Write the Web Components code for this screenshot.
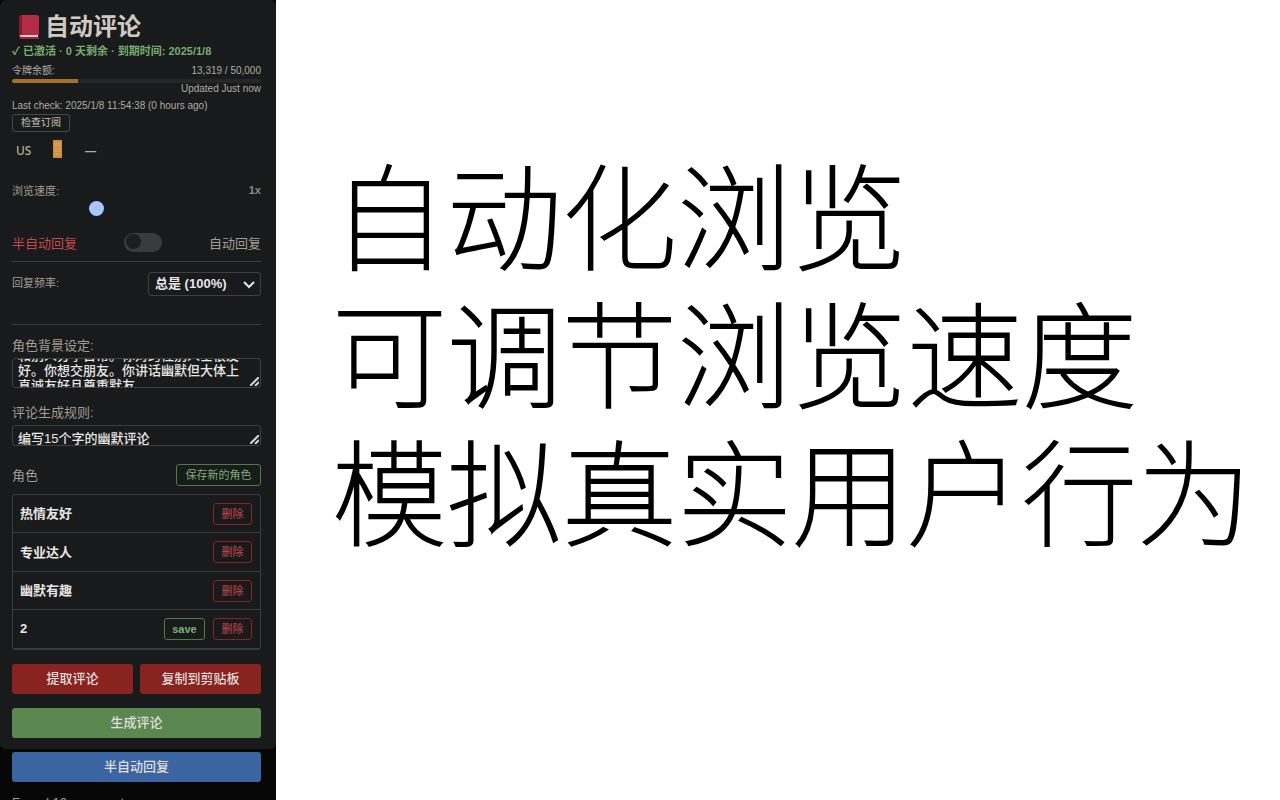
<!DOCTYPE html>
<html lang="zh-CN">
<head>
<meta charset="utf-8">
<meta name="viewport" content="width=device-width, initial-scale=1">
<title>自动评论</title>
<style>
html,body{margin:0;height:100%}
body{overflow:hidden;font-family:"Liberation Sans","Noto Sans CJK SC",sans-serif;background:#fff}
</style>
</head>
<body>
<comment-app></comment-app>
<script>
const define = (name, css, html, ready) => customElements.define(name, class extends HTMLElement {
  constructor() {
    super();
    this.attachShadow({ mode: "open" }).innerHTML =
      `<style>*{box-sizing:border-box}:host{display:block}${css}</style>${html}`;
  }
  connectedCallback() { if (ready) ready(this); }
});

define("plugin-button", `
  button{display:block;width:100%;height:30px;padding:0;border:0;border-radius:3px;background:var(--fill,#882320);color:#e0ddd9;font:500 13px/28px "Liberation Sans","Noto Sans CJK SC",sans-serif}
  :host([small]) button{height:22px;padding:0;border:1px solid var(--line);background:transparent;color:var(--ink);font-size:11px;font-weight:var(--weight,400);line-height:18px}
  :host([tiny]) button{height:18px;padding:0;border:1px solid #45494b;background:transparent;color:#b2aca2;font-size:10px;line-height:16px}
`, `<button type="button"><slot></slot></button>`);

define("status-header", `
  :host{color:#b2aca2;font-size:10px;line-height:16px}
  h1{display:flex;align-items:center;gap:5px;margin:0;padding-left:6px;height:32px;color:#cfcac3;font-size:24px;line-height:32px}
  h1 svg{width:22px;height:26px}
  .active{margin:0;color:#79ac70;font-weight:bold;font-size:11px;line-height:16px}
  .row{display:flex;justify-content:space-between;line-height:16px;margin-top:4px}
  .bar{height:4px;border-radius:2px;background:#242728;overflow:hidden}
  .bar i{display:block;height:100%;width:26.6%;background:#a17228}
  .right{text-align:right;margin:0;line-height:12px}
  .check{margin:3px 0 0}
  plugin-button{width:58px}
  .locale{display:flex;align-items:center;height:24px;margin-top:7px;padding-left:4px;font-size:12px;font-weight:500;font-family:"Noto Sans",sans-serif}
  .locale svg{margin:-4px 21px 0;width:11px;height:18px}
`, `
  <h1><svg viewBox="0 0 22 26"><path d="M3 1h16q2 0 2 2v18H3z" fill="#b22c45"/><path d="M1 3q0-2 3-2v21H1z" fill="#841b30"/><path d="M2 21h18v3H3q-2-1-1-3z" fill="#d5cfc9"/><path d="M1 21q1 2 3 2h17v2H3q-2 0-2-2z" fill="#9c213a"/></svg><span>自动评论</span></h1>
  <p class="active">✓ 已激活 · 0 天剩余 · 到期时间: 2025/1/8</p>
  <div class="row"><span>令牌余额:</span><span>13,319 / 50,000</span></div>
  <div class="bar"><i></i></div>
  <div class="right">Updated Just now</div>
  <p class="check">Last check: 2025/1/8 11:54:38 (0 hours ago)</p>
  <plugin-button tiny>检查订阅</plugin-button>
  <div class="locale"><span>US</span><svg viewBox="0 0 11 18"><path d="M1 0h9v18H1z" fill="#cb8b3a"/><path d="M2 2h7v5H2zM2 8h7v4H2zM2 13h7v3H2z" fill="#d49a50"/></svg><span>—</span></div>
`);

define("reply-settings", `
  :host{color:#a49d93;font-size:11px}
  .row{display:flex;align-items:center;justify-content:space-between}
  .speed{height:20px;margin-top:17px}
  .speed output{font-weight:bold;color:#8f8981}
  input[type=range]{appearance:none;display:block;width:100%;height:16px;margin:0;background:transparent}
  input[type=range]::-webkit-slider-thumb{appearance:none;width:15px;height:15px;border-radius:50%;background:#a8c7fa}
  .mode{height:38px;margin-top:7px;font-size:13px}
  .on{color:#c5484d}
  input[type=checkbox]{appearance:none;width:38px;height:19px;margin:0;border-radius:10px;background:#393c3e;padding:0 2px}
  input[type=checkbox]::before{content:"";display:block;width:15px;height:15px;border-radius:50%;background:#1b1d1e;margin-top:1px}
  .freq{border:solid #393d3f;border-width:1px 0;height:64px;padding-top:10px;align-items:flex-start}
  .freq label{line-height:22px}
  .select{position:relative;width:113px}
  select{appearance:none;width:100%;height:24px;padding:0 6px;border:1px solid #3d4143;border-radius:3px;background:#181a1b;color:#e8e6e3;font:bold 13px/20px "Liberation Sans","Noto Sans CJK SC",sans-serif}
  .select svg{position:absolute;right:6px;top:8px;width:12px;height:9px;pointer-events:none}
`, `
  <div class="row speed"><label for="speed">浏览速度:</label><output for="speed">1x</output></div>
  <input id="speed" type="range" min="0" max="100" value="33">
  <div class="row mode"><span class="on">半自动回复</span><input type="checkbox" aria-label="自动回复"><span>自动回复</span></div>
  <div class="row freq"><label for="freq">回复频率:</label><div class="select"><select id="freq"><option>总是 (100%)</option></select><svg viewBox="0 0 12 9"><path d="m1 2 5 5 5-5" fill="none" stroke="#e8e6e3" stroke-width="2"/></svg></div></div>
`);

define("text-field", `
  label{display:block;color:#a49d93;font-size:13px;line-height:18px;margin-bottom:3px}
  textarea{display:block;width:100%;height:var(--box,30px);padding:5px 15px 5px 5px;border:1px solid #3d4143;border-radius:3px;background:#181a1b;color:#e8e6e3;font:500 13px/15px "Liberation Sans","Noto Sans CJK SC",sans-serif;resize:none;overflow:hidden}
  .box{position:relative}
  svg{position:absolute;right:2px;bottom:2px;width:9px;height:9px}
`, `<label for="field"></label><div class="box"><textarea id="field"></textarea><svg viewBox="0 0 9 9"><path d="M0 9 9 0M5 9 9 5" stroke="#d8d5d0" stroke-width="2"/></svg></div>`, el => {
  el.shadowRoot.querySelector("label").textContent = el.getAttribute("label");
  const area = el.shadowRoot.querySelector("textarea");
  area.value = el.getAttribute("value");
  area.scrollTop = Number(el.getAttribute("scroll") || 0);
});

define("role-item", `
  :host{display:flex;align-items:center;gap:8px;height:var(--row,38px);padding:0 8px 0 7px;border-bottom:1px solid #393d3f;color:#e8e6e3;font-weight:bold;font-size:13px}
  .name{flex:1;padding-bottom:2px}
  .save{--line:#4b7f42;--ink:#7fae77;--weight:bold;width:41px}
  .remove{--line:#8b2223;--ink:#c5484d;width:39px}
  :host(:not([saveable])) .save{display:none}
`, `<span class="name"><slot></slot></span><plugin-button small class="save">save</plugin-button><plugin-button small class="remove">删除</plugin-button>`);

define("role-list", `
  .head{display:flex;align-items:center;justify-content:space-between;height:22px;color:#a49d93;font-size:13px}
  .head span{padding-bottom:2px}
  .head plugin-button{--line:#4b7f42;--ink:#7fae77;width:85px}
  .items{margin-top:8px;border:1px solid #393d3f;border-radius:3px}
  role-item:nth-child(even){--row:39px}
`, `
  <div class="head"><span>角色</span><plugin-button small>保存新的角色</plugin-button></div>
  <div class="items"><role-item>热情友好</role-item><role-item>专业达人</role-item><role-item>幽默有趣</role-item><role-item saveable>2</role-item></div>
`);

define("control-panel", `
  :host{width:276px;flex:none;height:100vh;overflow:hidden;background:#070707}
  section{padding:11px 15px 11px 12px;background:#181a1b;border-radius:6px}
  text-field{margin-top:12px}
  .rules{--box:21px;margin-top:16px}
  role-list{margin-top:18px}
  .pair{display:grid;grid-template-columns:1fr 1fr;gap:7px;margin:14px 0}
  .green{--fill:#5b8850}
  footer{padding:3px 15px 0 12px;color:#a49d93;font-size:13px}
  .blue{--fill:#3b65a2}
  p{margin:12px 0 0;line-height:18px}
`, `
  <section>
    <status-header></status-header>
    <reply-settings></reply-settings>
    <text-field label="角色背景设定:" scroll="31" value="你是一个热情的人，喜欢\n和别人分享日常。你对跨性别人士很友好。你想交朋友。你讲话幽默但大体上真诚友好且尊重默友"></text-field>
    <text-field class="rules" label="评论生成规则:" value="编写15个字的幽默评论"></text-field>
    <role-list></role-list>
    <div class="pair"><plugin-button>提取评论</plugin-button><plugin-button>复制到剪贴板</plugin-button></div>
    <plugin-button class="green">生成评论</plugin-button>
  </section>
  <footer><plugin-button class="blue">半自动回复</plugin-button><p>Found 10 comments</p></footer>
`);

define("feature-copy", `
  :host{flex:1;min-width:0;padding:142px 0 0 56px;color:#000}
  h2{margin:0;font:100 115px/138px "Noto Sans CJK SC",sans-serif;white-space:nowrap;-webkit-text-stroke:2px #000;stroke-linejoin:round}
`, `<h2>自动化浏览<br>可调节浏览速度<br>模拟真实用户行为</h2>`);

define("comment-app", `:host{display:flex;min-height:100vh}`, `<control-panel></control-panel><feature-copy></feature-copy>`);
</script>
</body>
</html>
